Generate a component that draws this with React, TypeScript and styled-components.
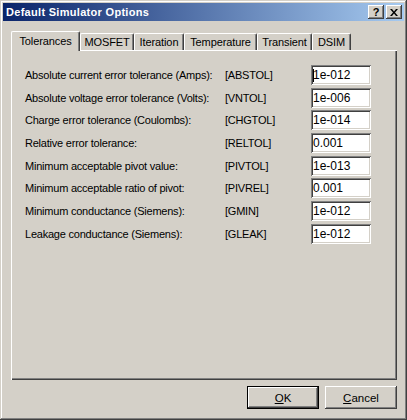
import React from "react";
import styled, { createGlobalStyle } from "styled-components";

const Global = createGlobalStyle`
  html, body { margin: 0; padding: 0; background: #D4D0C8; }
  body { font-family: "Liberation Sans", Arial, sans-serif; font-size: 11px; color: #000; }
`;

const Window = styled.div`
  width: 407px;
  height: 420px;
  box-sizing: border-box;
  padding: 3px;
  background: #d4d0c8;
  box-shadow: inset -1px -1px #404040, inset 1px 1px #d4d0c8, inset -2px -2px #808080, inset 2px 2px #ffffff;
  display: flex;
  flex-direction: column;
`;

const TitleBar = styled.div`
  height: 18px;
  display: flex;
  align-items: center;
  padding: 0 2px 0 3px;
  background: linear-gradient(to right, #0a246a, #a6caf0);
`;

const Title = styled.div`
  flex: 1;
  color: #fff;
  font-weight: bold;
  font-size: 11px;
  letter-spacing: 0.3px;
`;

const TitleButtons = styled.div`
  display: flex;
  gap: 2px;
`;

const CaptionButton = styled.div`
  width: 16px;
  height: 14px;
  box-sizing: border-box;
  background: #d4d0c8;
  box-shadow: inset -1px -1px #404040, inset 1px 1px #ffffff, inset -2px -2px #808080;
  display: flex;
  align-items: center;
  justify-content: center;
  font-weight: bold;
  font-size: 11px;
  line-height: 1;
`;

const Content = styled.div`
  padding: 10px 7px 0 8px;
  display: flex;
  flex-direction: column;
`;

const TabRow = styled.div`
  height: 20px;
  display: flex;
  align-items: flex-end;
`;

const Tab = styled.div<{ $w: number; $active?: boolean }>`
  width: ${(p) => p.$w}px;
  height: ${(p) => (p.$active ? 20 : 17)}px;
  margin-bottom: ${(p) => (p.$active ? 0 : 1)}px;
  box-sizing: border-box;
  background: #d4d0c8;
  border-top: 1px solid #fff;
  border-left: 1px solid #fff;
  border-right: 1px solid #404040;
  border-radius: 2px 2px 0 0;
  box-shadow: inset -1px 0 #808080;
  position: relative;
  z-index: ${(p) => (p.$active ? 1 : 0)};
  display: flex;
  justify-content: center;
  align-items: ${(p) => (p.$active ? "flex-start" : "center")};
  padding-top: ${(p) => (p.$active ? 3 : 0)}px;
  white-space: nowrap;
  font-size: 11px;
  letter-spacing: -0.1px;
`;

const Panel = styled.div`
  margin-top: -1px;
  height: 330px;
  box-sizing: border-box;
  box-shadow: inset 1px 1px #fff, inset -1px -1px #404040, inset -2px -2px #808080;
  padding: 15px 0 0 14px;
`;

const Grid = styled.div`
  display: grid;
  grid-template-columns: 200px 86px 60px;
  grid-auto-rows: 22.667px;
  align-items: start;
`;

const Label = styled.div`
  height: 20px;
  line-height: 20px;
  white-space: nowrap;
  letter-spacing: -0.22px;
`;

const Field = styled.div`
  width: 60px;
  height: 20px;
  box-sizing: border-box;
  background: #fff;
  box-shadow: inset 1px 1px #808080, inset -1px -1px #ffffff, inset 2px 2px #404040, inset -2px -2px #d4d0c8;
  padding: 0 0 0 2px;
  line-height: 20px;
  font-size: 12px;
  display: flex;
  align-items: center;
`;

const Caret = styled.span`
  display: inline-block;
  width: 1px;
  height: 13px;
  background: #000;
  margin-right: -1px;
`;

const ButtonRow = styled.div`
  display: flex;
  justify-content: flex-end;
  gap: 6px;
  margin-top: 6px;
`;

const Button = styled.div<{ $default?: boolean }>`
  width: 72px;
  height: 23px;
  box-sizing: border-box;
  background: #d4d0c8;
  display: flex;
  align-items: center;
  justify-content: center;
  font-size: 11.5px;
  border: ${(p) => (p.$default ? "1px solid #000" : "none")};
  box-shadow: inset -1px -1px #404040, inset 1px 1px #ffffff, inset -2px -2px #808080;
`;

const U = styled.span`
  text-decoration: underline;
`;

const rows: [string, string, string][] = [
  ["Absolute current error tolerance (Amps):", "[ABSTOL]", "1e-012"],
  ["Absolute voltage error tolerance (Volts):", "[VNTOL]", "1e-006"],
  ["Charge error tolerance (Coulombs):", "[CHGTOL]", "1e-014"],
  ["Relative error tolerance:", "[RELTOL]", "0.001"],
  ["Minimum acceptable pivot value:", "[PIVTOL]", "1e-013"],
  ["Minimum acceptable ratio of pivot:", "[PIVREL]", "0.001"],
  ["Minimum conductance (Siemens):", "[GMIN]", "1e-012"],
  ["Leakage conductance (Siemens):", "[GLEAK]", "1e-012"],
];

const tabs: [string, number][] = [
  ["Tolerances", 69],
  ["MOSFET", 54],
  ["Iteration", 50],
  ["Temperature", 73],
  ["Transient", 55],
  ["DSIM", 39],
];

export default function App() {
  return (
    <>
      <Global />
      <Window>
        <TitleBar>
          <Title>Default Simulator Options</Title>
          <TitleButtons>
            <CaptionButton>?</CaptionButton>
            <CaptionButton>
              <svg width="8" height="7" viewBox="0 0 8 7">
                <path d="M0 0h2l2 2.5L6 0h2L5 3.5 8 7H6L4 4.5 2 7H0l3-3.5z" fill="#000" />
              </svg>
            </CaptionButton>
          </TitleButtons>
        </TitleBar>
        <Content>
          <TabRow>
            {tabs.map(([t, w], i) => (
              <Tab key={t} $w={w} $active={i === 0}>
                {t}
              </Tab>
            ))}
          </TabRow>
          <Panel>
            <Grid>
              {rows.map(([l, c, v], i) => (
                <React.Fragment key={c}>
                  <Label>{l}</Label>
                  <Label>{c}</Label>
                  <Field>
                    {i === 0 && <Caret />}
                    {v}
                  </Field>
                </React.Fragment>
              ))}
            </Grid>
          </Panel>
          <ButtonRow>
            <Button $default>
              <U>O</U>K
            </Button>
            <Button>
              <U>C</U>ancel
            </Button>
          </ButtonRow>
        </Content>
      </Window>
    </>
  );
}
